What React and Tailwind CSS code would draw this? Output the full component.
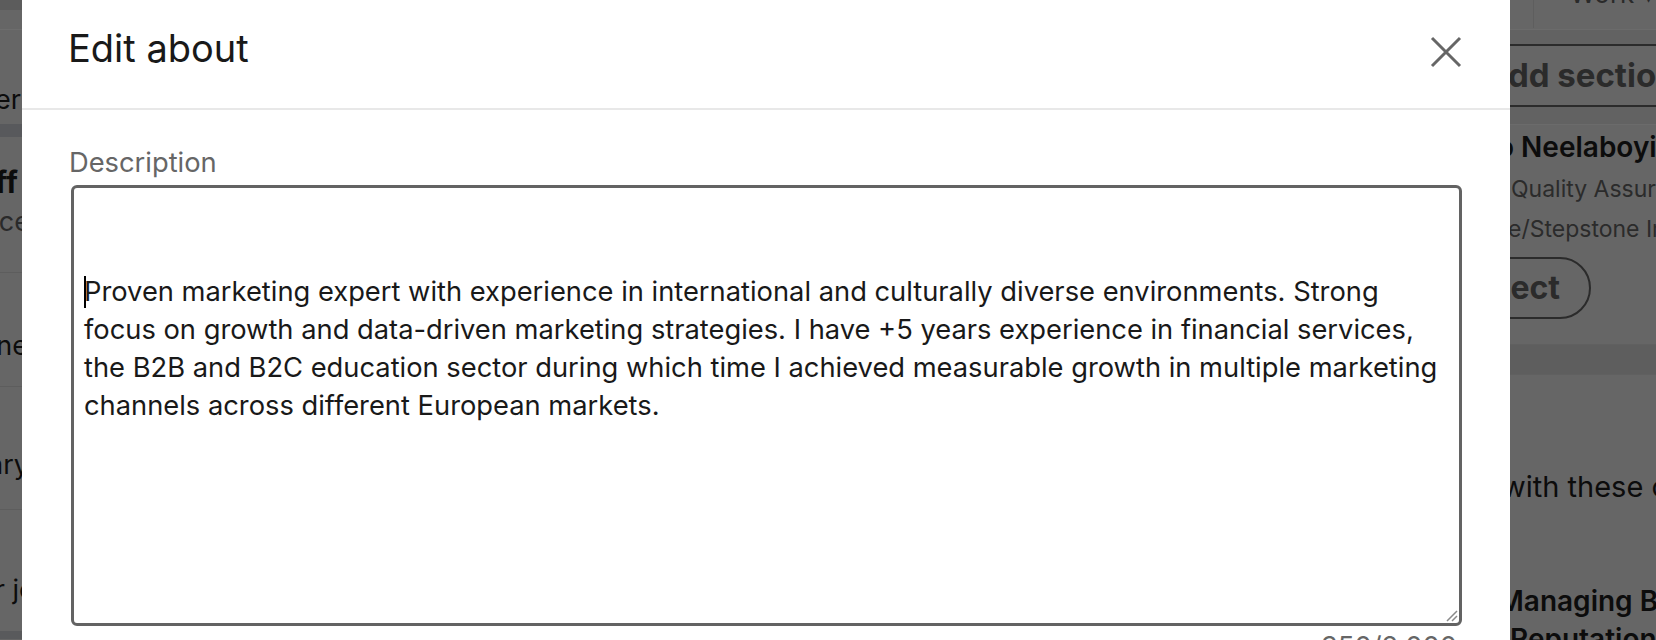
import React from 'react';

const LINES = [
  'Proven marketing expert with experience in international and culturally diverse environments. Strong',
  'focus on growth and data-driven marketing strategies. I have +5 years experience in financial services,',
  'the B2B and B2C education sector during which time I achieved measurable growth in multiple marketing',
  'channels across different European markets.',
];

const LeftStrip = () => (
  <div className="w-[22px] shrink-0 overflow-hidden flex flex-col text-[27px] leading-[38px] whitespace-nowrap text-[#0c0c0c]">
    <div className="h-[10px] bg-[#5c5c5c] shrink-0" />
    <div className="h-[19px] shrink-0" />
    <div className="h-[1px] bg-[#6d6d6d] shrink-0" />
    <div className="h-[94px] shrink-0 flex items-end justify-end pb-[5px] pr-[1px]">
      <span>Marketing Manager</span>
    </div>
    <div className="h-[13px] bg-[#58595c] shrink-0" />
    <div className="h-[135px] shrink-0 flex flex-col pt-[30px]">
      <div className="flex justify-end pr-[4px] font-bold text-[30px] leading-[30px]">
        <span>Staff</span>
      </div>
      <div className="mt-[10px] flex justify-end -mr-[8px] leading-[30px] text-[#2a2a2a]">
        <span>Workplace</span>
      </div>
    </div>
    <div className="h-[1px] bg-[#5d5d5d] shrink-0" />
    <div className="h-[113px] shrink-0 pt-[54px] flex justify-end -mr-[6px]">
      <span>Anyone</span>
    </div>
    <div className="h-[1px] bg-[#5d5d5d] shrink-0" />
    <div className="h-[122px] shrink-0 pt-[59px] flex justify-end -mr-[7px]">
      <span>Summary</span>
    </div>
    <div className="h-[1px] bg-[#5d5d5d] shrink-0" />
    <div className="h-[121px] shrink-0 pt-[61px] flex justify-end -mr-[44px]">
      <span>Your jobs</span>
    </div>
    <div className="h-[8px] bg-[#595a5c] shrink-0" />
  </div>
);

const RightStrip = () => (
  <div className="flex-1 overflow-hidden flex flex-col whitespace-nowrap text-[#0c0c0c]">
    <div className="h-[29px] shrink-0 flex items-start">
      <div className="w-[23px] shrink-0" />
      <div className="w-[1px] h-[28px] bg-[#5e5e5e] shrink-0" />
      <div className="-mt-[19px] pl-[36px] text-[26px] leading-[26px] text-[#2a2a2a]">Work ▾</div>
    </div>
    <div className="h-[1px] bg-[#6b6b6b] shrink-0" />
    <div className="h-[14px] bg-[#626262] shrink-0" />
    <div className="-ml-[60px] w-[320px] h-[63px] shrink-0 rounded-full border-2 border-[#2b2b2b] flex items-center pl-[32px] font-bold text-[33px] text-[#2b2b2b]">
      Add section
    </div>
    <div className="h-[17px] bg-[#626262] shrink-0" />
    <div className="h-[1px] bg-[#6b6b6b] shrink-0" />
    <div className="pt-[4px] -ml-[13px] text-[28px] leading-[36px] font-semibold">o Neelaboyina</div>
    <div className="mt-[4px] ml-[1px] text-[23px] leading-[40px] text-[#2b2b2b]">Quality Assurance</div>
    <div className="-ml-[2px] text-[23px] leading-[40px] text-[#2b2b2b]">e/Stepstone India</div>
    <div className="mt-[8px] -ml-[100px] w-[181px] h-[62px] shrink-0 rounded-full border-2 border-[#2b2b2b] flex items-center justify-end pr-[29px] font-bold text-[32px] text-[#2b2b2b]">
      Connect
    </div>
    <div className="h-[25px] shrink-0" />
    <div className="h-[31px] shrink-0 bg-[#5e5e5e] border-y border-[#606060]" />
    <div className="pt-[93px] -ml-[8px] text-[29px] leading-[38px]">with these connections</div>
    <div className="pt-[76px] -ml-[12px] text-[28px] leading-[38px] font-semibold">
      <div>Managing Business</div>
      <div className="ml-[12px]">Reputation</div>
    </div>
  </div>
);

const Modal = () => (
  <div className="w-[1488px] shrink-0 bg-white flex flex-col">
    <div className="h-[110px] shrink-0 border-b-2 border-[#e8e8e8] flex items-start justify-between pl-[46px] pr-[48px]">
      <h2 className="mt-[29px] text-[38px] leading-[38px] text-[#191919] font-normal">Edit about</h2>
      <button className="mt-[36px] w-[32px] h-[32px] text-[#666]" aria-label="Dismiss">
        <svg viewBox="0 0 32 32" width="32" height="32" fill="none" stroke="currentColor" strokeWidth="3">
          <path d="M2 2 L30 30 M30 2 L2 30" />
        </svg>
      </button>
    </div>
    <div className="pt-[34px] pl-[49px] pr-[48px]">
      <label className="block -ml-[2px] text-[27.3px] leading-[38px] text-[#666]">Description</label>
      <div className="relative mt-[3px] h-[441px] border-[3px] border-[#636363] rounded-[6px] pt-[85px] pl-[10px] text-[27.3px] leading-[38px] text-[#191919]">
        {LINES.map((line, i) => (
          <div key={i} className="whitespace-nowrap">
            {i === 0 && <span className="inline-block w-[2px] h-[32px] bg-black align-[-7px] -mr-[2px]" />}
            {line}
          </div>
        ))}
        <svg className="absolute right-[1px] bottom-[1px]" width="14" height="14" viewBox="0 0 14 14" fill="none" stroke="#8a8a8a" strokeWidth="1.5">
          <path d="M13 3 L3 13 M13 8 L8 13" />
        </svg>
      </div>
      <div className="mt-[2px] pr-[5px] text-right text-[27.3px] leading-[38px] text-[#666]">350/2,000</div>
    </div>
  </div>
);

export default function App() {
  return (
    <div className="h-[640px] w-[1656px] overflow-hidden flex bg-[#666] font-['Inter',sans-serif]">
      <LeftStrip />
      <Modal />
      <RightStrip />
    </div>
  );
}
